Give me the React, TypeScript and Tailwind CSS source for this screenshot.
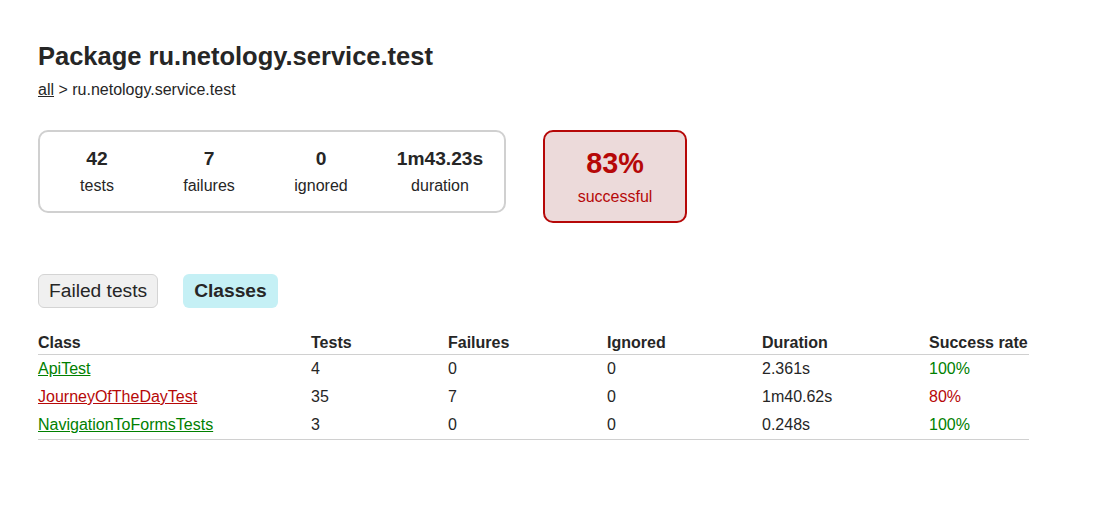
const counters = [
  { value: '42', label: 'tests', w: 'w-[112px]' },
  { value: '7', label: 'failures', w: 'w-[112px]' },
  { value: '0', label: 'ignored', w: 'w-[112px]' },
  { value: '1m43.23s', label: 'duration', w: 'w-[126px]' },
];

const rows = [
  { name: 'ApiTest', tests: '4', failures: '0', ignored: '0', duration: '2.361s', rate: '100%', ok: true },
  { name: 'JourneyOfTheDayTest', tests: '35', failures: '7', ignored: '0', duration: '1m40.62s', rate: '80%', ok: false },
  { name: 'NavigationToFormsTests', tests: '3', failures: '0', ignored: '0', duration: '0.248s', rate: '100%', ok: true },
];

export default function App() {
  return (
    <div className="min-h-[511px] bg-white text-[#262626] font-['Liberation_Sans',Arial,sans-serif] pl-[38px] pt-[41px]">
      <h1 className="text-[25.5px] leading-[30px] font-bold">Package ru.netology.service.test</h1>
      <div className="mt-[10px] text-[16px] leading-[18px]">
        <a href="#" className="underline">all</a> &gt; ru.netology.service.test
      </div>

      {/* summary */}
      <div className="mt-[31px] flex items-start">
        <div className="flex border-2 border-[#d0d0d0] rounded-[10px] px-px">
          {counters.map((c) => (
            <div key={c.label} className={`${c.w} pt-[16px] pb-[16px] text-center`}>
              <div className="text-[19.2px] leading-[22px] font-bold mb-[7px]">{c.value}</div>
              <div className="text-[16px] leading-[18px]">{c.label}</div>
            </div>
          ))}
        </div>
        <div className="ml-[37px] w-[144px] border-2 border-[#b60808] bg-[#ecdada] rounded-[10px] p-[15px] text-center text-[#b60808]">
          <div className="text-[28.8px] leading-[33px] font-bold mb-[8px]">83%</div>
          <div className="text-[16px] leading-[18px]">successful</div>
        </div>
      </div>

      {/* tabs */}
      <div className="mt-[51px] flex gap-[25px]">
        <div className="h-[34px] px-[10px] flex items-center rounded-[6px] border border-[#d4d4d4] bg-[#f0f0f0] text-[19.2px]">
          Failed tests
        </div>
        <div className="h-[34px] px-[11px] flex items-center rounded-[6px] bg-[#c5f0f5] text-[19.2px] font-bold">
          Classes
        </div>
      </div>

      {/* classes table */}
      <table className="mt-[21px] border-collapse text-[16px] leading-[18px] text-left">
        <thead>
          <tr className="border-b border-[#d0d0d0]">
            <th className="w-[273px] pt-[5px] pb-[2px] font-bold">Class</th>
            <th className="w-[137px] pt-[5px] pb-[2px] font-bold">Tests</th>
            <th className="w-[159px] pt-[5px] pb-[2px] font-bold">Failures</th>
            <th className="w-[155px] pt-[5px] pb-[2px] font-bold">Ignored</th>
            <th className="w-[167px] pt-[5px] pb-[2px] font-bold">Duration</th>
            <th className="w-[100px] pt-[5px] pb-[2px] font-bold">Success rate</th>
          </tr>
        </thead>
        <tbody>
          {rows.map((r, i) => (
            <tr key={r.name} className={i === rows.length - 1 ? 'border-b border-[#d0d0d0]' : ''}>
              <td className="py-[5px]">
                <a href="#" className={`underline ${r.ok ? 'text-[#008000]' : 'text-[#b60808]'}`}>{r.name}</a>
              </td>
              <td className="py-[5px]">{r.tests}</td>
              <td className="py-[5px]">{r.failures}</td>
              <td className="py-[5px]">{r.ignored}</td>
              <td className="py-[5px]">{r.duration}</td>
              <td className={`py-[5px] ${r.ok ? 'text-[#008000]' : 'text-[#b60808]'}`}>{r.rate}</td>
            </tr>
          ))}
        </tbody>
      </table>
    </div>
  );
}
